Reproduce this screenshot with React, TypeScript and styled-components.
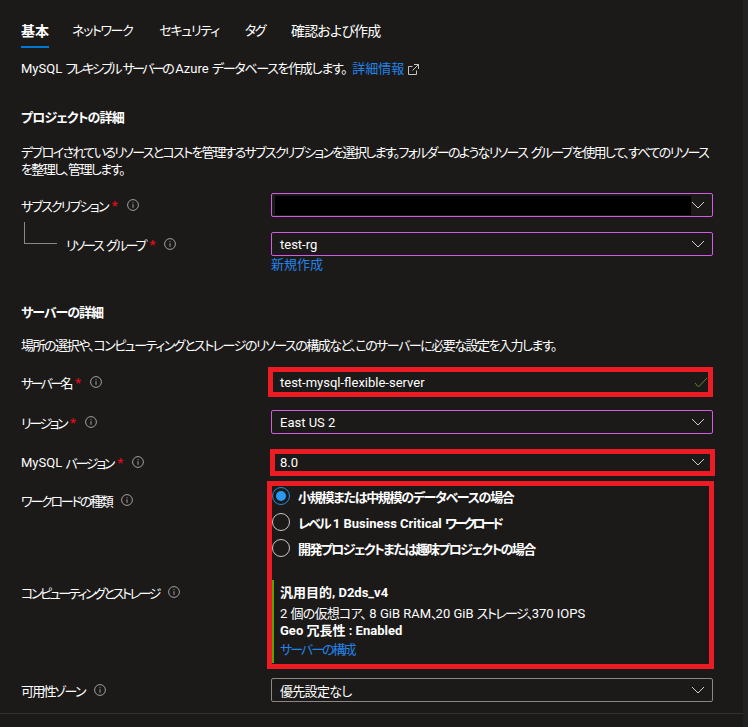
import { ReactNode } from "react";
import styled, { createGlobalStyle } from "styled-components";

const GlobalStyle = createGlobalStyle`
    html, body {
        margin: 0;
        padding: 0;
        background: #1b1a19;
    }
    body {
        color: #ffffff;
        font-family: Roboto, "Noto Sans CJK JP", sans-serif;
        font-size: 13px;
        font-feature-settings: "palt";
    }
`;

const Page = styled.div`
    display: flex;
    width: 748px;
    height: 727px;
    overflow: hidden;
`;

const Main = styled.div`
    flex: 1;
    min-width: 0;
`;

const ScrollEdge = styled.div`
    width: 5px;
    background: #212120;
`;

const Content = styled.div`
    padding-left: 21px;
    width: 692px;
`;

const Tight = styled.span<{ $s: number }>`
    letter-spacing: ${(p) => p.$s}px;
    word-spacing: 2px;
`;

const TabBar = styled.div`
    display: flex;
`;

const Tab = styled.div<{ $active?: boolean; $size?: number; $after?: number }>`
    padding: 21px 0 5px;
    margin-right: ${(p) => p.$after ?? 0}px;
    line-height: 20px;
    font-size: ${(p) => p.$size ?? 13}px;
    font-weight: ${(p) => (p.$active ? 700 : 400)};
    border-bottom: 2px solid ${(p) => (p.$active ? "#0078d4" : "transparent")};
`;

const Text = styled.p<{ $top: number }>`
    margin: ${(p) => p.$top}px 0 0;
    line-height: 17px;
`;

const Intro = styled.p`
    margin: 11px 0 0;
    line-height: 20px;
    display: flex;
    align-items: center;
    white-space: pre;
`;

const Heading = styled.h2<{ $top: number }>`
    margin: ${(p) => p.$top}px 0 0;
    font-size: 13px;
    font-weight: 700;
    line-height: 20px;
`;

const Link = styled.a`
    color: #2382e8;
    text-decoration: none;
`;

const IntroLink = styled(Link)`
    margin-left: 6px;
`;

const ExternalIcon = styled.svg`
    margin-left: 4px;
    width: 11px;
    height: 11px;
`;

const Row = styled.div<{ $top: number }>`
    display: grid;
    grid-template-columns: 250px 442px;
    margin-top: ${(p) => p.$top}px;
`;

const Label = styled.div<{ $offset?: number }>`
    display: flex;
    align-items: center;
    height: 24px;
    margin-top: ${(p) => p.$offset ?? 0}px;
    white-space: pre;
`;

const Star = styled.span`
    color: #e00b1c;
    margin: 2px 0 0 4px;
    font-size: 13px;
    font-weight: 700;
    line-height: 14px;
`;

const Info = styled.svg`
    width: 12px;
    height: 12px;
    margin-left: 9px;
`;

const Connector = styled.div`
    width: 33px;
    height: 22px;
    margin: -22px 9px 0 3px;
    box-sizing: border-box;
    border-left: 1px solid #8a8886;
    border-bottom: 1px solid #8a8886;
`;

const Field = styled.div<{ $neutral?: boolean }>`
    position: relative;
    display: flex;
    align-items: center;
    justify-content: space-between;
    box-sizing: border-box;
    height: 24px;
    padding: 0 7px 0 8px;
    border: 1px solid ${(p) => (p.$neutral ? "#8a8886" : "#d35ce6")};
    border-radius: 2px;
`;

const Redacted = styled.div`
    height: 19px;
    width: 416px;
    margin-left: -5px;
    background: #000000;
`;

const Frame = styled.div<{ $t: number; $r: number; $b: number; $l: number }>`
    position: absolute;
    top: ${(p) => p.$t}px;
    right: ${(p) => p.$r}px;
    bottom: ${(p) => p.$b}px;
    left: ${(p) => p.$l}px;
    border: 5px solid #ed1c24;
    pointer-events: none;
`;

const CreateLink = styled(Link)`
    display: block;
    line-height: 18px;
`;

const FramedSection = styled.div`
    position: relative;
    margin-top: 13px;
`;

const RadioList = styled.div`
    display: flex;
    flex-direction: column;
    gap: 8px;
    height: 70px;
    margin-bottom: 23px;
`;

const RadioRow = styled.div`
    display: flex;
    align-items: center;
    gap: 8px;
    height: 18px;
    font-weight: 700;
`;

const RadioText = styled.span`
    white-space: pre;
`;

const RadioMark = styled.span<{ $checked?: boolean }>`
    display: flex;
    align-items: center;
    justify-content: center;
    box-sizing: border-box;
    width: 18px;
    height: 18px;
    margin-left: 1px;
    border-radius: 50%;
    border: 1px solid ${(p) => (p.$checked ? "#2b88d8" : "#c8c6c4")};

    &::after {
        content: "";
        display: ${(p) => (p.$checked ? "block" : "none")};
        width: 10px;
        height: 10px;
        border-radius: 50%;
        background: #2899f5;
    }
`;

const Summary = styled.div`
    margin-left: 1px;
    padding: 0 0 3px 6px;
    border-left: 2px solid #57a300;
    line-height: 17px;
    white-space: pre;
`;

const SummaryTitle = styled.div`
    font-weight: 700;
    line-height: 26px;
    margin-bottom: -1px;
`;

const SummaryStrong = styled.div`
    font-weight: 700;
`;

const SummaryLink = styled(Link)`
    display: block;
    margin-top: 1px;
    line-height: 20px;
`;

const BottomLine = styled.div`
    margin-top: 11px;
    border-top: 1px solid #323130;
`;

const CheckIcon = styled.svg`
    margin-right: -3px;
`;

const Chevron = () => (
    <svg width="14" height="8" viewBox="0 0 14 8" fill="none">
        <path d="M1 1l6 6 6-6" stroke="#d2d0ce" strokeWidth="1" />
    </svg>
);

const Check = () => (
    <CheckIcon width="14" height="11" viewBox="0 0 14 11" fill="none">
        <path d="M1 6l3.5 4L13 1" stroke="#5c8a2e" strokeWidth="1" />
    </CheckIcon>
);

const InfoIcon = () => (
    <Info viewBox="0 0 12 12" fill="none">
        <circle cx="6" cy="6" r="5.4" stroke="#a19f9d" strokeWidth="1" />
        <path d="M6 5.2v3.6M6 3.2v1" stroke="#a19f9d" strokeWidth="1" />
    </Info>
);

const FieldLabel = ({
    prefix,
    text,
    tight,
    required,
}: {
    prefix?: string;
    text: string;
    tight: number;
    required?: boolean;
}) => (
    <>
        {prefix}
        <Tight $s={tight}>{text}</Tight>
        {required && <Star>*</Star>}
        <InfoIcon />
    </>
);

const Select = ({ children, neutral }: { children: ReactNode; neutral?: boolean }) => (
    <Field $neutral={neutral}>
        {children}
        <Chevron />
    </Field>
);

const App = () => {
    return (
        <Page>
            <GlobalStyle />
            <Main>
                <Content>
                    <TabBar>
                        <Tab $active $size={14} $after={23}>基本</Tab>
                        <Tab $after={27}><Tight $s={-1.4}>ネットワーク</Tight></Tab>
                        <Tab $after={26}><Tight $s={-1.3}>セキュリティ</Tight></Tab>
                        <Tab $after={26}><Tight $s={-1.5}>タグ</Tight></Tab>
                        <Tab $size={14}><Tight $s={-0.8}>確認および作成</Tight></Tab>
                    </TabBar>
                    <Intro>
                        {"MySQL "}
                        <Tight $s={-2.6}>フレキシブル サーバーの</Tight>
                        {" Azure "}
                        <Tight $s={-1.3}>データベースを作成します。</Tight>
                        <IntroLink href="#">詳細情報</IntroLink>
                        <ExternalIcon viewBox="0 0 11 11" fill="none">
                            <path d="M8.5 6.500v4h-8v-8h4M6 .5h4.500v4.500M10.500 .5L4.500 6.500" stroke="#c8c6c4" />
                        </ExternalIcon>
                    </Intro>

                    <Heading $top={29}><Tight $s={-0.9}>プロジェクトの詳細</Tight></Heading>
                    <Text $top={16}>
                        <Tight $s={-1.68}>
                            デプロイされているリソースとコストを管理するサブスクリプションを選択します。フォルダーのようなリソース グループを使用して、すべてのリソース
                            <br />
                            を整理し、管理します。
                        </Tight>
                    </Text>

                    <Row $top={15}>
                        <Label>
                            <FieldLabel text="サブスクリプション" tight={-1.8} required />
                        </Label>
                        <Select>
                            <Redacted />
                        </Select>
                    </Row>
                    <Row $top={15}>
                        <Label>
                            <Connector />
                            <FieldLabel text="リソース グループ" tight={-2.1} required />
                        </Label>
                        <div>
                            <Select>test-rg</Select>
                            <CreateLink href="#">新規作成</CreateLink>
                        </div>
                    </Row>

                    <Heading $top={29}><Tight $s={-1}>サーバーの詳細</Tight></Heading>
                    <Text $top={14}>
                        <Tight $s={-1.5}>
                            場所の選択や、コンピューティングとストレージのリソースの構成など、このサーバーに必要な設定を入力します。
                        </Tight>
                    </Text>

                    <Row $top={16}>
                        <Label>
                            <FieldLabel text="サーバー名" tight={-2.6} required />
                        </Label>
                        <Field>
                            test-mysql-flexible-server
                            <Check />
                            <Frame $t={-4} $r={-1} $b={-4} $l={-4} />
                        </Field>
                    </Row>
                    <Row $top={16}>
                        <Label>
                            <FieldLabel text="リージョン" tight={-2.4} required />
                        </Label>
                        <Select>East US 2</Select>
                    </Row>
                    <Row $top={16}>
                        <Label>
                            <FieldLabel prefix="MySQL " text="バージョン" tight={-2.2} required />
                        </Label>
                        <Field>
                            8.0
                            <Chevron />
                            <Frame $t={-2} $r={-3} $b={-3} $l={-2} />
                        </Field>
                    </Row>

                    <FramedSection>
                        <Row $top={0}>
                            <Label $offset={1}>
                                <FieldLabel text="ワークロードの種類" tight={-2.2} />
                            </Label>
                            <RadioList>
                                <RadioRow>
                                    <RadioMark $checked />
                                    <Tight $s={-1.3}>小規模または中規模のデータベースの場合</Tight>
                                </RadioRow>
                                <RadioRow>
                                    <RadioMark />
                                    <RadioText>
                                        <Tight $s={-2}>レベル</Tight>
                                        {" 1 Business Critical "}
                                        <Tight $s={-3}>ワークロード</Tight>
                                    </RadioText>
                                </RadioRow>
                                <RadioRow>
                                    <RadioMark />
                                    <Tight $s={-1.6}>開発プロジェクトまたは趣味プロジェクトの場合</Tight>
                                </RadioRow>
                            </RadioList>
                        </Row>
                        <Row $top={0}>
                            <Label>
                                <FieldLabel text="コンピューティングとストレージ" tight={-2.4} />
                            </Label>
                            <Summary>
                                <SummaryTitle>汎用目的, D2ds_v4</SummaryTitle>
                                <div>
                                    {"2 "}
                                    <Tight $s={-0.8}>個の仮想コア、</Tight>
                                    {" 8 GiB RAM"}
                                    <Tight $s={-2}>、</Tight>
                                    {"20 GiB "}
                                    <Tight $s={-1.6}>ストレージ、</Tight>
                                    {"370 IOPS"}
                                </div>
                                <SummaryStrong>Geo 冗長性 : Enabled</SummaryStrong>
                                <SummaryLink href="#"><Tight $s={-2}>サーバーの構成</Tight></SummaryLink>
                            </Summary>
                        </Row>
                        <Frame $t={-6} $r={-1} $b={-6} $l={246} />
                    </FramedSection>

                    <Row $top={15}>
                        <Label>
                            <FieldLabel text="可用性ゾーン" tight={-1.8} />
                        </Label>
                        <Select neutral><Tight $s={-0.7}>優先設定なし</Tight></Select>
                    </Row>
                </Content>
                <BottomLine />
            </Main>
            <ScrollEdge />
        </Page>
    );
};

export default App;
